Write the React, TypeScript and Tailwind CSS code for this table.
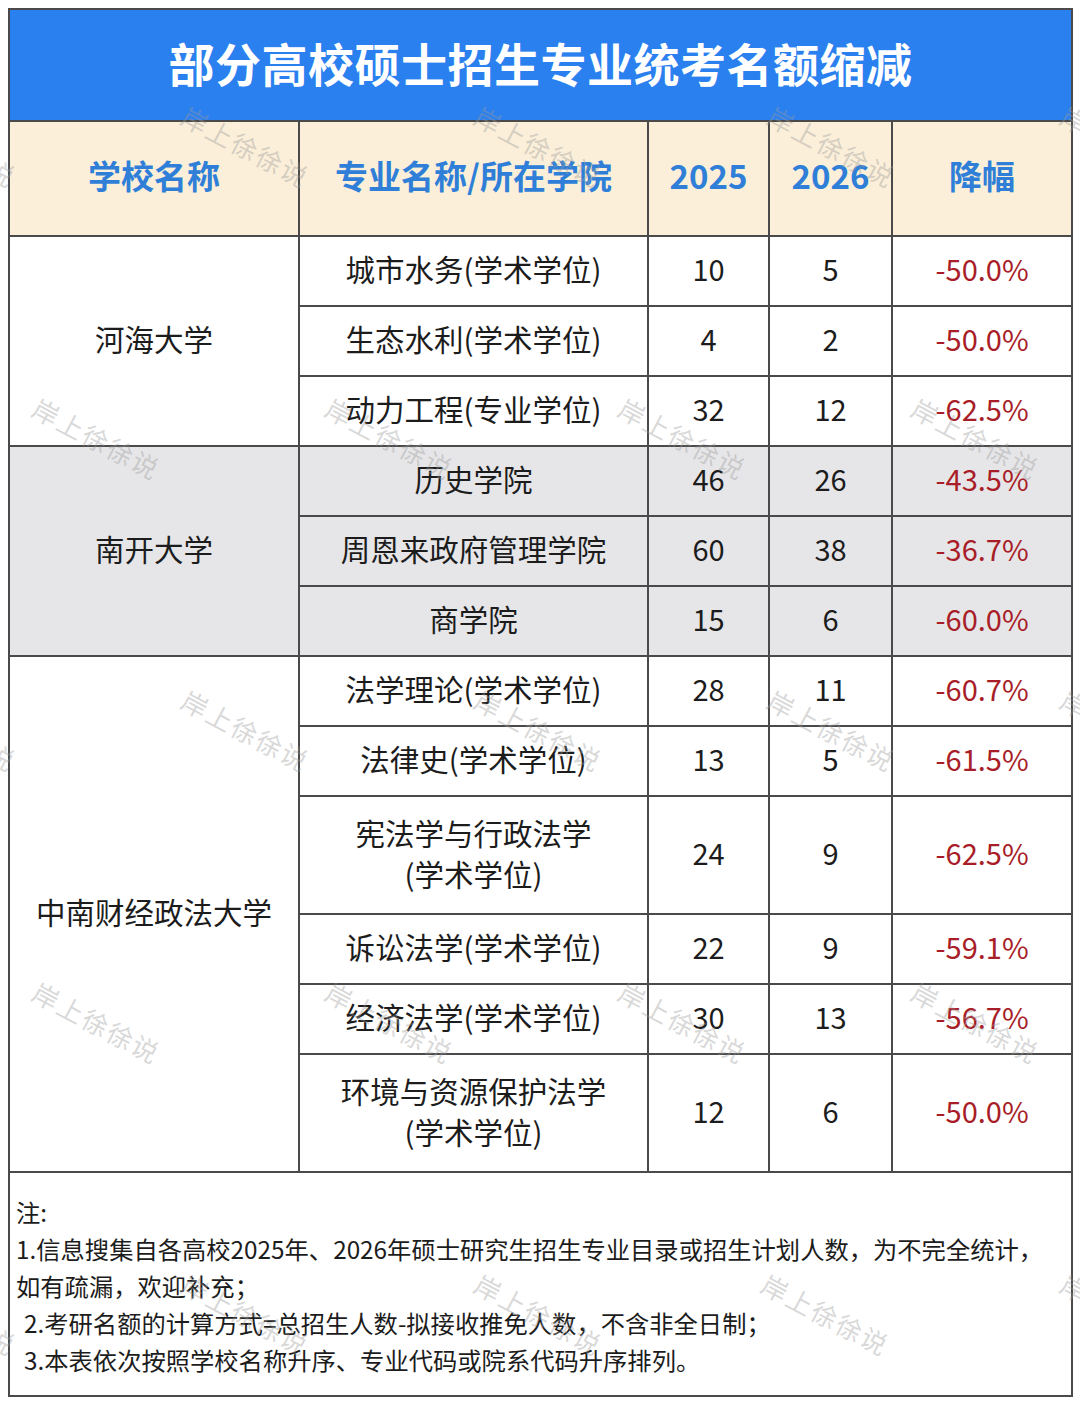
import React from 'react';

type Row = { major: string[]; y25: string; y26: string; drop: string };
type Group = { school: string; gray?: boolean; rows: Row[] };

const groups: Group[] = [
  {
    school: '河海大学',
    rows: [
      { major: ['城市水务(学术学位)'], y25: '10', y26: '5', drop: '-50.0%' },
      { major: ['生态水利(学术学位)'], y25: '4', y26: '2', drop: '-50.0%' },
      { major: ['动力工程(专业学位)'], y25: '32', y26: '12', drop: '-62.5%' },
    ],
  },
  {
    school: '南开大学',
    gray: true,
    rows: [
      { major: ['历史学院'], y25: '46', y26: '26', drop: '-43.5%' },
      { major: ['周恩来政府管理学院'], y25: '60', y26: '38', drop: '-36.7%' },
      { major: ['商学院'], y25: '15', y26: '6', drop: '-60.0%' },
    ],
  },
  {
    school: '中南财经政法大学',
    rows: [
      { major: ['法学理论(学术学位)'], y25: '28', y26: '11', drop: '-60.7%' },
      { major: ['法律史(学术学位)'], y25: '13', y26: '5', drop: '-61.5%' },
      { major: ['宪法学与行政法学', '(学术学位)'], y25: '24', y26: '9', drop: '-62.5%' },
      { major: ['诉讼法学(学术学位)'], y25: '22', y26: '9', drop: '-59.1%' },
      { major: ['经济法学(学术学位)'], y25: '30', y26: '13', drop: '-56.7%' },
      { major: ['环境与资源保护法学', '(学术学位)'], y25: '12', y26: '6', drop: '-50.0%' },
    ],
  },
];

// watermark centres, staggered grid across the sheet
const marks = [
  'left-[-47px] top-[146px]', 'left-[246px] top-[146px]', 'left-[539px] top-[146px]', 'left-[832px] top-[146px]', 'left-[1125px] top-[146px]',
  'left-[97px] top-[438px]', 'left-[390px] top-[438px]', 'left-[683px] top-[438px]', 'left-[976px] top-[438px]',
  'left-[-47px] top-[730px]', 'left-[246px] top-[730px]', 'left-[539px] top-[730px]', 'left-[832px] top-[730px]', 'left-[1125px] top-[730px]',
  'left-[97px] top-[1022px]', 'left-[390px] top-[1022px]', 'left-[683px] top-[1022px]', 'left-[976px] top-[1022px]',
  'left-[-47px] top-[1314px]', 'left-[246px] top-[1314px]', 'left-[539px] top-[1314px]', 'left-[826px] top-[1314px]', 'left-[1125px] top-[1314px]',
];

const cell = 'border-2 border-[#4a4a4a] pb-[5px] text-center align-middle';

function Th({ children }: { children: React.ReactNode }) {
  return <th className={`${cell} bg-[#fbefd9] text-[33px] font-bold text-[#2f7fd8]`}>{children}</th>;
}

export default function App() {
  return (
    <div className="relative h-[1405px] w-[1080px] overflow-hidden bg-white pl-2 pt-2 font-['Noto_Sans_CJK_SC','Noto_Sans',sans-serif] text-[#1c1c1c]">
      <table className="w-[1063px] table-fixed border-collapse">
        <colgroup>
          <col className="w-[290px]" />
          <col className="w-[349px]" />
          <col className="w-[121px]" />
          <col className="w-[123px]" />
          <col className="w-[180px]" />
        </colgroup>
        <tbody>
          <tr className="h-[112px]">
            <td colSpan={5} className={`${cell} bg-[#2b80ef] text-[46px] font-bold tracking-[0.5px] text-white`}>
              部分高校硕士招生专业统考名额缩减
            </td>
          </tr>
          <tr className="h-[115px]">
            <Th>学校名称</Th>
            <Th>专业名称/所在学院</Th>
            <Th>2025</Th>
            <Th>2026</Th>
            <Th>降幅</Th>
          </tr>
          {groups.map((g) =>
            g.rows.map((r, i) => {
              const bg = g.gray ? 'bg-[#e6e6e8]' : 'bg-white';
              return (
                <tr key={g.school + i} className={r.major.length > 1 ? 'h-[118px]' : 'h-[70px]'}>
                  {i === 0 && (
                    <td rowSpan={g.rows.length} className={`${cell} ${bg} text-[29.5px]`}>
                      {g.school}
                    </td>
                  )}
                  <td className={`${cell} ${bg} text-[29.5px] leading-[41px]`}>
                    {r.major.map((m) => (
                      <div key={m}>{m}</div>
                    ))}
                  </td>
                  <td className={`${cell} ${bg} text-[29px]`}>{r.y25}</td>
                  <td className={`${cell} ${bg} text-[29px]`}>{r.y26}</td>
                  <td className={`${cell} ${bg} text-[29px] text-[#a81d27]`}>{r.drop}</td>
                </tr>
              );
            })
          )}
          <tr className="h-[224px]">
            <td colSpan={5} className="border-2 border-[#4a4a4a] px-1.5 pt-5 align-top text-[24.3px] leading-[37px] text-[#1c1c1c]">
              <div>注:</div>
              <div>1.信息搜集自各高校2025年、2026年硕士研究生招生专业目录或招生计划人数，为不完全统计，</div>
              <div>如有疏漏，欢迎补充；</div>
              <div className="pl-2">2.考研名额的计算方式=总招生人数-拟接收推免人数，不含非全日制；</div>
              <div className="pl-2">3.本表依次按照学校名称升序、专业代码或院系代码升序排列。</div>
            </td>
          </tr>
        </tbody>
      </table>

      {marks.map((m) => (
        <span
          key={m}
          className={`pointer-events-none absolute ${m} -translate-x-1/2 -translate-y-1/2 rotate-[28deg] whitespace-nowrap text-[26px] tracking-[2px] text-[#9a9a9a]/40`}
        >
          岸上徐徐说
        </span>
      ))}
    </div>
  );
}
